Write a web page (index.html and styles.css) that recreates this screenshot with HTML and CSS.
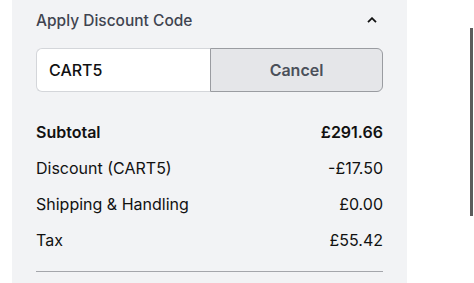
FILE: index.html
```html
<!DOCTYPE html>
<html>
<head>
<meta charset="utf-8">
<link rel="stylesheet" href="styles.css">
</head>
<body>
<div class="page">
  <section class="panel">
    <div class="head">
      <span class="title">Apply Discount Code</span>
      <svg class="chev" width="10" height="6" viewBox="0 0 10 6"><path d="M1 5.2 L5 1.2 L9 5.2" fill="none" stroke="#111" stroke-width="1.8"/></svg>
    </div>
    <div class="field">
      <div class="input">CART5</div>
      <div class="btn">Cancel</div>
    </div>
    <div class="rows">
      <div class="row strong"><span>Subtotal</span><span>£291.66</span></div>
      <div class="row"><span>Discount (CART5)</span><span>-£17.50</span></div>
      <div class="row"><span>Shipping &amp; Handling</span><span>£0.00</span></div>
      <div class="row"><span>Tax</span><span>£55.42</span></div>
    </div>
    <div class="divider"></div>
  </section>
  <div class="scroll"></div>
</div>
</body>
</html>
```

FILE: styles.css
```css
html, body { margin: 0; padding: 0; background: #fff; }
body { font-family: Inter, "Noto Sans", sans-serif; color: #111; }
.page { display: flex; align-items: flex-start; height: 283px; overflow: hidden; }
.panel { margin-left: 12px; width: 395px; height: 283px; background: #f2f3f5; padding: 0 24px; box-sizing: border-box; }
.head { height: 40px; display: flex; align-items: center; justify-content: space-between; padding-right: 6px; }
.title { font-size: 15.5px; color: #3f4450; font-weight: 500; }
.chev { display: block; }
.field { margin-top: 8px; display: flex; height: 44px; }
.input { flex: 0 0 174px; box-sizing: border-box; background: #fff; border: 1px solid #d4d6da; border-right: none; border-radius: 6px 0 0 6px; display: flex; align-items: center; padding-left: 12px; font-size: 16px; font-weight: 500; }
.btn { flex: 1; box-sizing: border-box; background: #e5e6e9; border: 1px solid #9a9ca1; border-radius: 0 6px 6px 0; display: flex; align-items: center; justify-content: center; font-size: 16px; font-weight: 600; color: #4b505a; }
.rows { margin-top: 22px; }
.row { height: 36px; display: flex; align-items: center; justify-content: space-between; font-size: 16px; color: #111; }
.row.strong { font-weight: 600; }
.divider { margin-top: 13px; height: 1px; background: #a4a6ab; }
.scroll { margin-left: 63px; margin-top: 28px; width: 3px; height: 188px; background: #5c5c5c; }
```
